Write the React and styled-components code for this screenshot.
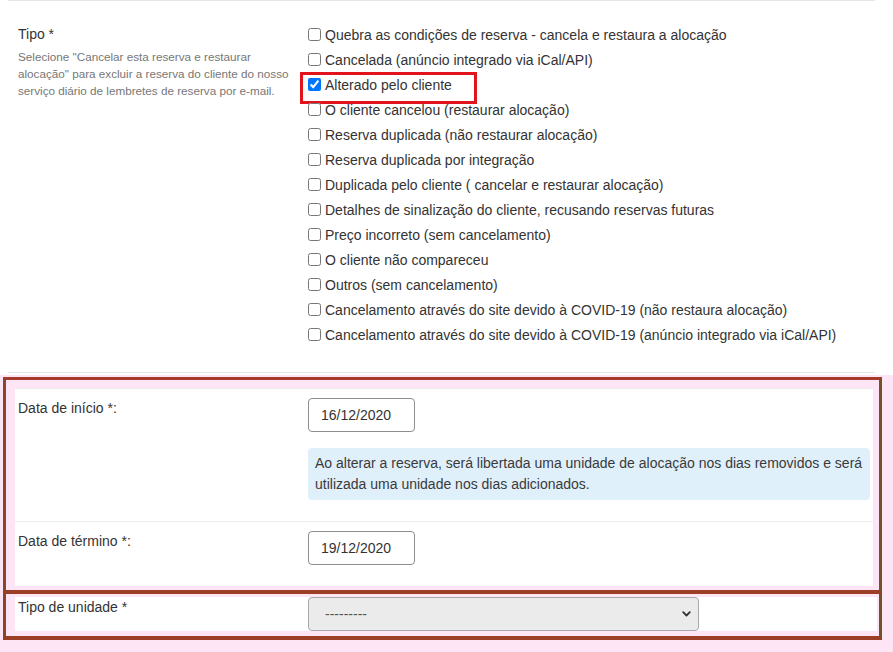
import React from 'react';
import styled, { createGlobalStyle } from 'styled-components';

const Global = createGlobalStyle`
  html, body { margin: 0; padding: 0; background: #fff; }
  body { font-family: "Liberation Sans", Arial, sans-serif; color: #333; }
  * { box-sizing: border-box; }
`;

const Page = styled.div`
  width: 893px;
  height: 652px;
  overflow: hidden;
  background: #fff;
`;

const TypeSection = styled.section`
  margin: 0 18px 0 8px;
  border-top: 1px solid #e6e6e6;
  border-bottom: 1px solid #e6e6e6;
  padding: 21px 0 25px 10px;
  display: grid;
  grid-template-columns: 290px 1fr;
`;

const LabelCol = styled.div`
  padding-top: 2px;
`;

const FieldLabel = styled.div`
  font-size: 14px;
  line-height: 20px;
  color: #333;
`;

const Help = styled.p`
  margin: 4px 0 0;
  width: 276px;
  font-size: 11.7px;
  line-height: 17px;
  color: #777;
`;

const OptionList = styled.div`
  display: flex;
  flex-direction: column;
  align-items: flex-start;
`;

const Option = styled.label`
  position: relative;
  display: flex;
  align-items: center;
  height: 25px;
  font-size: 14px;
  line-height: 20px;
  color: #333;
  white-space: nowrap;

  ${p => p.$marked && `
    &::after {
      content: '';
      position: absolute;
      left: -8px;
      right: -25px;
      top: -0.5px;
      height: 26px;
      border: 3px solid #e2131c;
    }
  `}
`;

const Check = styled.input`
  width: 13px;
  height: 13px;
  margin: 0 4px 0 0;
  flex: none;
`;

const Annotation = styled.div`
  margin-top: 2px;
  background: #fde5f6;
  padding: 2px 11px 20px 3px;
`;

const Frame = styled.div`
  border-style: solid;
  border-color: #a53b2c #71502a #9a3e25 #8a4627;
  border-width: ${p => (p.$joined ? '0 3px 4px 3px' : '3px 3px 4px 3px')};
  padding: ${p => (p.$joined ? '3px 2px 5px 9px' : '8px 6px 4px 9px')};
`;

const Sheet = styled.div`
  background: #fff;
`;

const Row = styled.div`
  display: grid;
  grid-template-columns: 290px 1fr;
  padding: ${p => p.$pad || '9px 0 21px 3px'};
  border-top: ${p => (p.$plain ? 'none' : '1px solid #ececec')};
`;

const Control = styled.div`
  display: flex;
  flex-direction: column;
  align-items: flex-start;
  gap: 16px;
`;

const DateInput = styled.input`
  width: 107px;
  height: 34px;
  padding: 0 12px;
  border: 1px solid #8e8e8e;
  border-radius: 4px;
  font-family: "Liberation Sans", Arial, sans-serif;
  font-size: 14px;
  color: #333;
  background: #fff;
  outline: none;
`;

const Info = styled.div`
  width: 562px;
  padding: 5px 4px 5px 7px;
  background: #e0f0fb;
  border-radius: 4px;
  font-size: 14px;
  line-height: 21px;
  color: #3a3a3a;
`;

const SelectWrap = styled.div`
  position: relative;
  width: 391px;
  height: 34px;
`;

const Select = styled.select`
  appearance: none;
  width: 100%;
  height: 100%;
  padding: 0 30px 0 16px;
  border: 1px solid #a9a9a9;
  border-radius: 4px;
  background: #ebebeb;
  font-family: "Liberation Sans", Arial, sans-serif;
  font-size: 14px;
  color: #555;
  outline: none;
`;

const Chevron = styled.svg`
  position: absolute;
  right: 8px;
  top: 14px;
  width: 9px;
  height: 6px;
  pointer-events: none;
`;

const options = [
  'Quebra as condições de reserva - cancela e restaura a alocação',
  'Cancelada (anúncio integrado via iCal/API)',
  'Alterado pelo cliente',
  'O cliente cancelou (restaurar alocação)',
  'Reserva duplicada (não restaurar alocação)',
  'Reserva duplicada por integração',
  'Duplicada pelo cliente ( cancelar e restaurar alocação)',
  'Detalhes de sinalização do cliente, recusando reservas futuras',
  'Preço incorreto (sem cancelamento)',
  'O cliente não compareceu',
  'Outros (sem cancelamento)',
  'Cancelamento através do site devido à COVID-19 (não restaura alocação)',
  'Cancelamento através do site devido à COVID-19 (anúncio integrado via iCal/API)',
];

export default function App() {
  return (
    <Page>
      <Global />
      <TypeSection>
        <LabelCol>
          <FieldLabel>Tipo *</FieldLabel>
          <Help>
            Selecione "Cancelar esta reserva e restaurar alocação" para excluir a reserva do
            cliente do nosso serviço diário de lembretes de reserva por e-mail.
          </Help>
        </LabelCol>
        <OptionList>
          {options.map((o, i) => (
            <Option key={o} $marked={i === 2}>
              <Check type="checkbox" defaultChecked={i === 2} />
              {o}
            </Option>
          ))}
        </OptionList>
      </TypeSection>

      <Annotation>
        <Frame>
          <Sheet>
            <Row>
              <FieldLabel>Data de início *:</FieldLabel>
              <Control>
                <DateInput type="text" defaultValue="16/12/2020" />
                <Info>
                  Ao alterar a reserva, será libertada uma unidade de alocação nos dias removidos e
                  será utilizada uma unidade nos dias adicionados.
                </Info>
              </Control>
            </Row>
            <Row $pad="9px 0 21px 3px">
              <FieldLabel>Data de término *:</FieldLabel>
              <Control>
                <DateInput type="text" defaultValue="19/12/2020" />
              </Control>
            </Row>
          </Sheet>
        </Frame>
        <Frame $joined>
          <Sheet>
            <Row $plain $pad="0 0 0 3px">
              <FieldLabel>Tipo de unidade *</FieldLabel>
              <SelectWrap>
                <Select defaultValue="">
                  <option value="">---------</option>
                </Select>
                <Chevron viewBox="0 0 9 6">
                  <polyline points="1.2,1.2 4.5,4.5 7.8,1.2" fill="none" stroke="#333" strokeWidth="1.8" strokeLinecap="round" strokeLinejoin="round" />
                </Chevron>
              </SelectWrap>
            </Row>
          </Sheet>
        </Frame>
      </Annotation>
    </Page>
  );
}
